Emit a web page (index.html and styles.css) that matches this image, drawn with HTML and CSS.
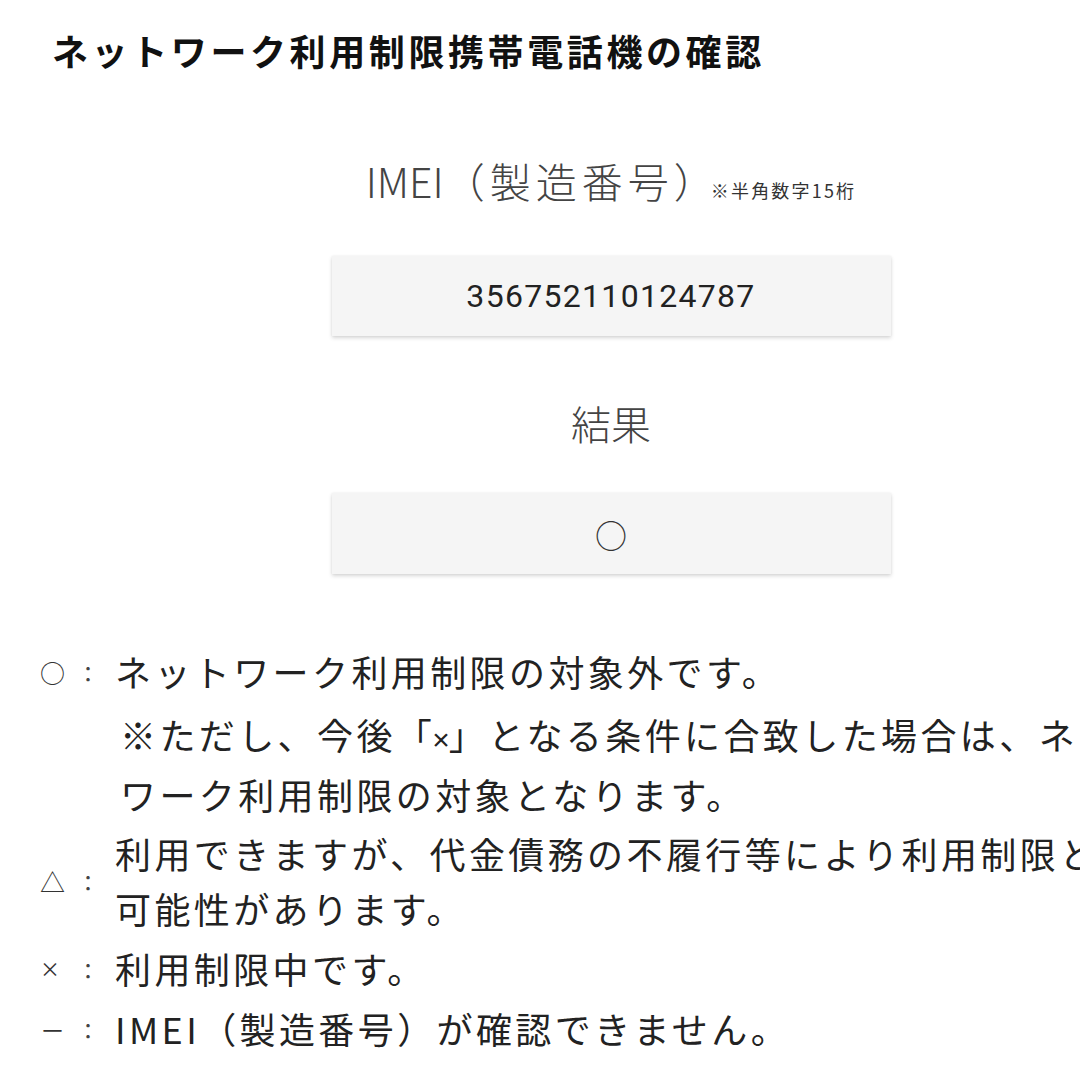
FILE: index.html
```html
<!DOCTYPE html>
<html lang="ja">
<head>
<meta charset="utf-8">
<title>ネットワーク利用制限携帯電話機の確認</title>
<link rel="stylesheet" href="styles.css">
</head>
<body>
<div class="page">
  <h1 class="title">ネットワーク利用制限携帯電話機の確認</h1>

  <div class="field-label imei-label"><span class="lat">IMEI</span><span class="cjk">（製造番号）</span><span class="note">※半角数字15桁</span></div>
  <div class="box"><span class="imei">356752110124787</span></div>

  <div class="field-label result-label">結果</div>
  <div class="box result-box"><span class="result-mark">○</span></div>

  <div class="legend">
    <div class="item">
      <div class="marker"><span class="sym circle">○</span><span class="colon">：</span></div>
      <div class="text">ネットワーク利用制限の対象外です。</div>
    </div>
    <div class="sub-note">※ただし、今後「<span class="x">×</span>」となる条件に合致した場合は、ネットワーク利用制限の対象となります。</div>
    <div class="item">
      <div class="marker"><span class="sym tri">△</span><span class="colon">：</span></div>
      <div class="text">利用できますが、代金債務の不履行等により利用制限となる可能性があります。</div>
    </div>
    <div class="item">
      <div class="marker"><span class="sym cross">×</span><span class="colon">：</span></div>
      <div class="text">利用制限中です。</div>
    </div>
    <div class="item">
      <div class="marker"><span class="sym dash">－</span><span class="colon">：</span></div>
      <div class="text">IMEI（製造番号）が確認できません。</div>
    </div>
  </div>
</div>
</body>
</html>
```

FILE: styles.css
```css
html, body {
  margin: 0;
  padding: 0;
  background: #ffffff;
  overflow: hidden;
}

body {
  font-family: "Noto Sans CJK JP", "Noto Sans", sans-serif;
  color: #222222;
}

.page {
  width: 1222px;
  display: flex;
  flex-direction: column;
}

.title {
  margin: 0;
  padding: 25px 0 0 52px;
  font-size: 36px;
  line-height: 50px;
  font-weight: 700;
  letter-spacing: 3.6px;
  color: #111111;
}

.field-label {
  align-self: center;
  margin-top: 77px;
  font-size: 40px;
  line-height: 56px;
  font-weight: 300;
  color: #444444;
  white-space: nowrap;
}

.imei-label {
  font-size: 41px;
}

.imei-label .cjk {
  letter-spacing: 5px;
}

.note {
  margin-left: -9px;
  font-size: 18px;
  letter-spacing: 2.2px;
  font-weight: 400;
  color: #333333;
}

.result-label {
  margin-top: 59px;
}

.box {
  align-self: center;
  width: 559px;
  height: 80px;
  margin-top: 38px;
  background: #f5f5f5;
  box-shadow: 0 2px 4px rgba(0, 0, 0, 0.16), 0 0 2px rgba(0, 0, 0, 0.06);
  display: flex;
  align-items: center;
  justify-content: center;
}

.result-box {
  margin-top: 42px;
  height: 81px;
}

.imei {
  font-family: Roboto, "Noto Sans", sans-serif;
  font-size: 32px;
  letter-spacing: 1.3px;
  color: #222222;
}

.result-mark {
  font-size: 32px;
  line-height: 1;
  color: #333333;
}

.legend {
  margin-top: 70px;
  display: flex;
  flex-direction: column;
  gap: 5px;
  font-size: 36px;
  letter-spacing: 3.4px;
  color: #222222;
}

.item {
  display: flex;
  align-items: center;
}

.marker {
  flex: 0 0 115px;
  display: flex;
  align-items: center;
  box-sizing: border-box;
  padding-left: 40px;
  letter-spacing: 0;
}

.sym {
  width: 37px;
  font-size: 25px;
  color: #333333;
}

.sym.cross {
  font-size: 20px;
}

.colon {
  font-size: 22px;
  color: #444444;
}

.text {
  width: 1075px;
  line-height: 55px;
}

.sub-note {
  margin: 3px 0 0 120px;
  width: 1050px;
  line-height: 54px;
}

.sub-note .x {
  display: inline-block;
  font-family: "Liberation Sans", sans-serif;
  font-size: 30px;
  letter-spacing: 0;
  margin: 0 -1px 0 -3px;
}
```
